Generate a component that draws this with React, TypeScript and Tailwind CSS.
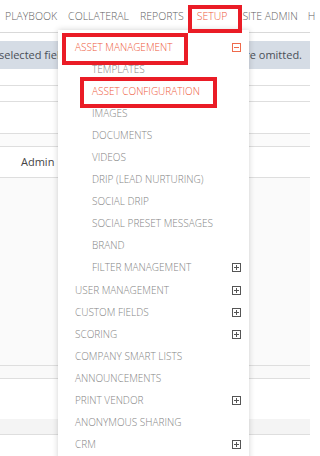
import React from "react";

type Item = { t: string; l: 1 | 2; red?: boolean; icon?: "plus" | "minus" };

const items: Item[] = [
  { t: "ASSET MANAGEMENT", l: 1, red: true, icon: "minus" },
  { t: "TEMPLATES", l: 2 },
  { t: "ASSET CONFIGURATION", l: 2, red: true },
  { t: "IMAGES", l: 2 },
  { t: "DOCUMENTS", l: 2 },
  { t: "VIDEOS", l: 2 },
  { t: "DRIP (LEAD NURTURING)", l: 2 },
  { t: "SOCIAL DRIP", l: 2 },
  { t: "SOCIAL PRESET MESSAGES", l: 2 },
  { t: "BRAND", l: 2 },
  { t: "FILTER MANAGEMENT", l: 2, icon: "plus" },
  { t: "USER MANAGEMENT", l: 1, icon: "plus" },
  { t: "CUSTOM FIELDS", l: 1, icon: "plus" },
  { t: "SCORING", l: 1, icon: "plus" },
  { t: "COMPANY SMART LISTS", l: 1 },
  { t: "ANNOUNCEMENTS", l: 1 },
  { t: "PRINT VENDOR", l: 1, icon: "plus" },
  { t: "ANONYMOUS SHARING", l: 1 },
  { t: "CRM", l: 1, icon: "plus" },
];

function BoxIcon({ kind }: { kind: "plus" | "minus" }) {
  const c = kind === "minus" ? "#ef6a4c" : "#555";
  return (
    <svg width="9" height="9" viewBox="0 0 9 9" className="block">
      <rect x="0.5" y="0.5" width="8" height="8" fill="none" stroke={c} strokeWidth="1" />
      <line x1="2" y1="4.5" x2="7" y2="4.5" stroke={c} strokeWidth="1" />
      {kind === "plus" && <line x1="4.5" y1="2" x2="4.5" y2="7" stroke={c} strokeWidth="1" />}
    </svg>
  );
}

const font = { fontFamily: "'Open Sans', 'DejaVu Sans', sans-serif" };

export default function App() {
  return (
    <div className="relative w-[320px] h-[456px] overflow-hidden bg-white" style={font}>
      {/* Top nav */}
      <div className="w-[320px] h-[32px] flex items-center gap-[11px] pl-[5px] pt-[1px] text-[10.5px] font-light text-[#5f5f5f] whitespace-nowrap overflow-hidden">
        <span>PLAYBOOK</span>
        <span>COLLATERAL</span>
        <span>REPORTS</span>
        <span className="text-[#ee5a3c] ml-[2px]">SETUP</span>
        <span className="ml-[4px]">SITE ADMIN</span>
        <span className="ml-[-1px]">H</span>
      </div>
      {/* Background page */}
      <div className="w-[310px] flex flex-col">
        <div className="h-px bg-[#d9d9d9]" />
        <div className="h-[8px]" />
        <div className="h-[28px] bg-[#d5dce5] flex items-center justify-between text-[11px] text-[#4a4f57] whitespace-nowrap pr-[8px]">
          <span className="-ml-[1px]">selected fields</span>
          <span>are omitted.</span>
        </div>
        <div className="h-[16px]" />
        <div className="h-[16px] border-t border-[#dedede]" />
        <div className="h-[32px] border-t border-[#dedede]" />
        <div className="h-[13px] border-t border-[#dedede] bg-[#fbfbfb]" />
        <div className="h-[31px] border-t border-[#dedede] flex items-center pl-[21px] text-[11px] text-[#444]">
          Admin
        </div>
        <div className="h-[188px] border-t border-[#dedede] bg-[#fafafa]" />
        <div className="h-[13px] border-t border-[#dedede] bg-[#f9f9f9]" />
        <div className="h-[41px] border-t border-[#dedede] bg-white" />
        <div className="h-[15px] bg-[#f4f4f4]" />
        <div className="h-[30px] border-t border-[#dedede] bg-white" />
      </div>

      {/* Dropdown panel */}
      <div className="absolute left-[58px] top-[30px] w-[191px] h-[440px] bg-white shadow-[0_0_6px_rgba(0,0,0,0.18)] pt-[6px]">
        {items.map((it, i) => (
          <div
            key={i}
            className={`h-[22.1px] flex items-center justify-between pr-[8px] text-[10px] font-light whitespace-nowrap ${
              it.l === 1 ? "pl-[17px]" : "pl-[34px]"
            } ${it.red ? "text-[#ee5a3c]" : "text-[#858585]"}`}
          >
            <span>{it.t}</span>
            {it.icon && <BoxIcon kind={it.icon} />}
          </div>
        ))}
      </div>

      {/* Annotation boxes */}
      <div className="absolute left-[188px] top-[5px] w-[54px] h-[28px] border-[4px] border-[#ea1c26]" />
      <div className="absolute left-[62px] top-[33px] w-[126px] h-[32px] border-[4px] border-[#ea1c26]" />
      <div className="absolute left-[80px] top-[77px] w-[137px] h-[31px] border-[4px] border-[#ea1c26]" />
    </div>
  );
}
